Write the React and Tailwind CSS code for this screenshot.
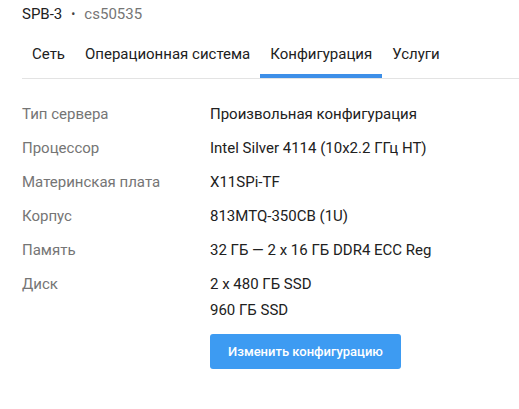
export default function App() {
  const rows = [
    ["Тип сервера", ["Произвольная конфигурация"]],
    ["Процессор", ["Intel Silver 4114 (10x2.2 ГГц HT)"]],
    ["Материнская плата", ["X11SPi-TF"]],
    ["Корпус", ["813MTQ-350CB (1U)"]],
    ["Память", ["32 ГБ — 2 x 16 ГБ DDR4 ECC Reg"]],
    ["Диск", ["2 x 480 ГБ SSD", "960 ГБ SSD"]],
  ];
  return (
    <div className="w-[519px] h-[409px] bg-white overflow-hidden pl-[22px]" style={{ fontFamily: "Roboto, 'Noto Sans', sans-serif" }}>
      <div className="pt-[4px] h-[24px] text-[15px] leading-[20px] flex items-center">
        <span className="text-[#212121]">SPB-3</span>
        <span className="text-[#444] mx-[9px] text-[12px]">•</span>
        <span className="text-[#757575]">cs50535</span>
      </div>
      <div className="mt-[10px] flex border-b border-[#e3e3e3] text-[15px] leading-[20px] text-[#212121]">
        <div className="px-[10px] pt-[10px] pb-[14px]">Сеть</div>
        <div className="px-[10px] pt-[10px] pb-[14px]">Операционная система</div>
        <div className="px-[10px] pt-[10px] pb-[14px] relative">
          Конфигурация
          <div className="absolute left-0 right-0 bottom-0 h-[4px] bg-[#3d8fe8]"></div>
        </div>
        <div className="px-[10px] pt-[10px] pb-[14px]">Услуги</div>
      </div>
      <div className="mt-[22px] text-[15px]">
        {rows.map(([label, vals]) => (
          <div key={label} className="flex">
            <div className="w-[188px] text-[#757575] leading-[26px] mb-[8px]">{label}</div>
            <div className="text-[#212121] leading-[26px] mb-[8px]">
              {vals.map((v) => (
                <div key={v} className="h-[26px]">{v}</div>
              ))}
            </div>
          </div>
        ))}
      </div>
      <div className="pl-[188px] mt-[3px]">
        <button className="h-[35px] w-[191px] rounded-[3px] bg-[#3d9bf2] text-white text-[13px] font-medium">
          Изменить конфигурацию
        </button>
      </div>
    </div>
  );
}
